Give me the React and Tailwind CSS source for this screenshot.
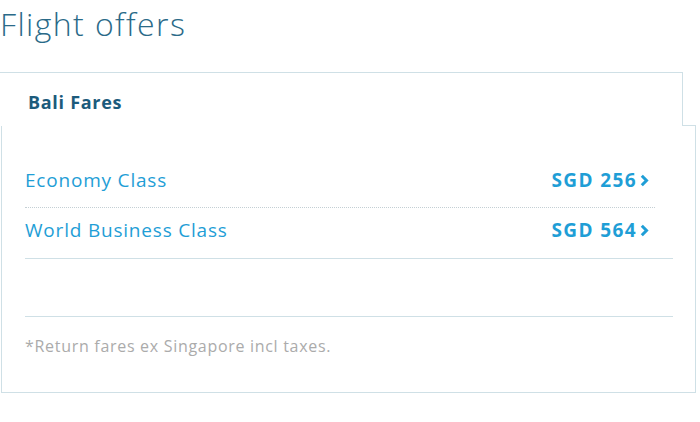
const fares = [
  { name: "Economy Class", price: "SGD 256" },
  { name: "World Business Class", price: "SGD 564" },
];

const Chevron = () => (
  <svg width="9" height="13" viewBox="0 0 9 13" fill="none" stroke="currentColor" strokeWidth="3" strokeLinecap="butt" strokeLinejoin="miter">
    <polyline points="1.8,1.8 6.5,6.5 1.8,11.2" />
  </svg>
);

export default function App() {
  return (
    <div className="h-[422px] w-[700px] overflow-hidden bg-white font-['Open_Sans',sans-serif]">
      <h1 className="h-[40px] mt-[4px] text-[32px] leading-[40px] font-light text-[#2a6a88] tracking-[1.4px]">
        Flight offers
      </h1>

      <div className="mt-[28px]">
        {/* tab */}
        <div className="relative z-10 -mb-px flex h-[54px] w-[683px] items-center border-t border-r border-[#cfe0e6] bg-white pl-[28px] pt-[6px]">
          <span className="text-[18px] font-bold tracking-[0.7px] text-[#1c5b7c]">Bali Fares</span>
        </div>

        {/* panel */}
        <div className="ml-px h-[268px] w-[695px] border border-[#cfe0e6] pl-[23px] pt-[32px]">
          <div className="w-[648px]">
            <ul className="border-b border-[#cfe0e6]">
              {fares.map((f, i) => (
                <li
                  key={f.name}
                  className={
                    i === 0
                      ? "mr-[18px] flex h-[50px] items-start justify-between border-b border-dotted border-[#c4cfd4] pr-[6px] pt-[10px]"
                      : "mr-[18px] flex h-[50px] items-start justify-between pr-[6px] pt-[10px]"
                  }
                >
                  <span className="text-[19px] leading-[24px] tracking-[0.8px] text-[#1f9ed6]">{f.name}</span>
                  <span className="flex items-center gap-[3px] text-[19px] font-bold leading-[24px] tracking-[1.4px] text-[#1f9ed6]">
                    {f.price}
                    <Chevron />
                  </span>
                </li>
              ))}
            </ul>
            <div className="h-[58px] border-b border-[#cfe0e6]" />
            <p className="pt-[18px] text-[16px] leading-[22px] tracking-[0.7px] text-[#ababab]">
              *Return fares ex Singapore incl taxes.
            </p>
          </div>
        </div>
      </div>
    </div>
  );
}
